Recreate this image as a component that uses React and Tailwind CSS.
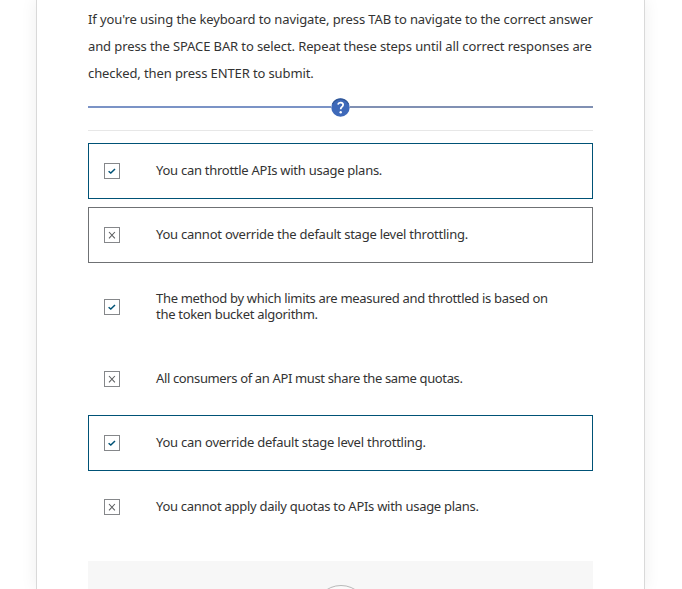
const instructions = [
  { text: "If you're using the keyboard to navigate, press TAB to navigate to the correct answer", spacing: 'tracking-[-0.11px]' },
  { text: 'and press the SPACE BAR to select. Repeat these steps until all correct responses are', spacing: 'tracking-[-0.105px]' },
  { text: 'checked, then press ENTER to submit.', spacing: 'tracking-[-0.11px]' },
];

const answers = [
  { lines: [{ text: 'You can throttle APIs with usage plans.', spacing: 'tracking-[-0.27px]' }], correct: true, frame: 'border-[#005276]' },
  { lines: [{ text: 'You cannot override the default stage level throttling.', spacing: 'tracking-[-0.24px]' }], correct: false, frame: 'border-[#6f7174]' },
  {
    lines: [
      { text: 'The method by which limits are measured and throttled is based on', spacing: 'tracking-[-0.31px]' },
      { text: 'the token bucket algorithm.', spacing: 'tracking-[-0.3px]' },
    ],
    correct: true,
    frame: 'border-transparent',
  },
  { lines: [{ text: 'All consumers of an API must share the same quotas.', spacing: 'tracking-[-0.36px]' }], correct: false, frame: 'border-transparent' },
  { lines: [{ text: 'You can override default stage level throttling.', spacing: 'tracking-[-0.24px]' }], correct: true, frame: 'border-[#005276]' },
  { lines: [{ text: 'You cannot apply daily quotas to APIs with usage plans.', spacing: 'tracking-[-0.28px]' }], correct: false, frame: 'border-transparent' },
];

function Mark({ correct }) {
  return (
    <span className="flex size-4 shrink-0 items-center justify-center border border-[#85878a] bg-white">
      <svg className="size-3.5" viewBox="0 0 14 14" fill="none">
        {correct ? (
          <path d="M3.6 7.2 5.8 9.1 10 5" stroke="#005276" strokeWidth="1.5" />
        ) : (
          <path d="M4 4 9.9 10.4M9.9 4 4 10.4" stroke="#5f6163" strokeWidth="1.1" />
        )}
      </svg>
    </span>
  );
}

function Answer({ lines, correct, frame }) {
  return (
    <div className={`flex items-center border py-[19px] pl-[15px] ${frame}`}>
      <Mark correct={correct} />
      <div className="-mt-0.5 ml-9 text-[13px] leading-4 text-[#333333]">
        {lines.map((line) => (
          <p key={line.text} className="whitespace-nowrap">
            <span className={line.spacing}>{line.text}</span>
          </p>
        ))}
      </div>
    </div>
  );
}

function AnswerList() {
  return (
    <div className="mt-3 grid grid-rows-[56px_56px_72px_56px_56px_56px] gap-2">
      {answers.map((answer) => (
        <Answer key={answer.lines[0].text} {...answer} />
      ))}
    </div>
  );
}

export default function App() {
  return (
    <div className="h-[589px] overflow-hidden bg-white pl-9 font-['Noto_Sans',sans-serif]">
      <main className="h-full w-[609px] border-x border-[#d9d9d9] bg-white px-[51px] pt-1.5 shadow-[0_0_16px_rgba(0,0,0,0.07)]">
        <div className="text-[13px] leading-[27px] text-[#333333]">
          {instructions.map((line) => (
            <p key={line.text} className="whitespace-nowrap">
              <span className={line.spacing}>{line.text}</span>
            </p>
          ))}
        </div>
        <div className="mt-[10px] flex h-5 items-center">
          <div className="h-[1.5px] flex-1 bg-[#7b93c6]" />
          <svg className="size-[19px]" viewBox="0 0 19 19">
            <circle cx="9.5" cy="9.5" r="9.2" fill="#3e69b9" />
            <path d="M1.5 6a9 9 0 0 1 16 0" stroke="#315796" strokeWidth="1.2" fill="none" />
            <path d="M6.9 6.6Q7.5 4.4 9.8 4.6 12.3 4.8 12.1 7 12 8.3 10.5 9.2 9.7 9.8 9.7 11.3" stroke="white" strokeWidth="1.8" fill="none" />
            <circle cx="9.7" cy="14.2" r="1.2" fill="white" />
          </svg>
          <div className="h-[1.5px] flex-1 bg-[#8090b3]" />
        </div>
        <div className="mt-[13px] border-t border-[#e7e7e7]" />
        <AnswerList />
        <div className="mt-[26px] flex h-24 justify-center bg-[#f7f7f7] pt-6">
          <div className="size-[54px] rounded-full border border-[#b8b8b8] bg-[#fafafa]" />
        </div>
      </main>
    </div>
  );
}
